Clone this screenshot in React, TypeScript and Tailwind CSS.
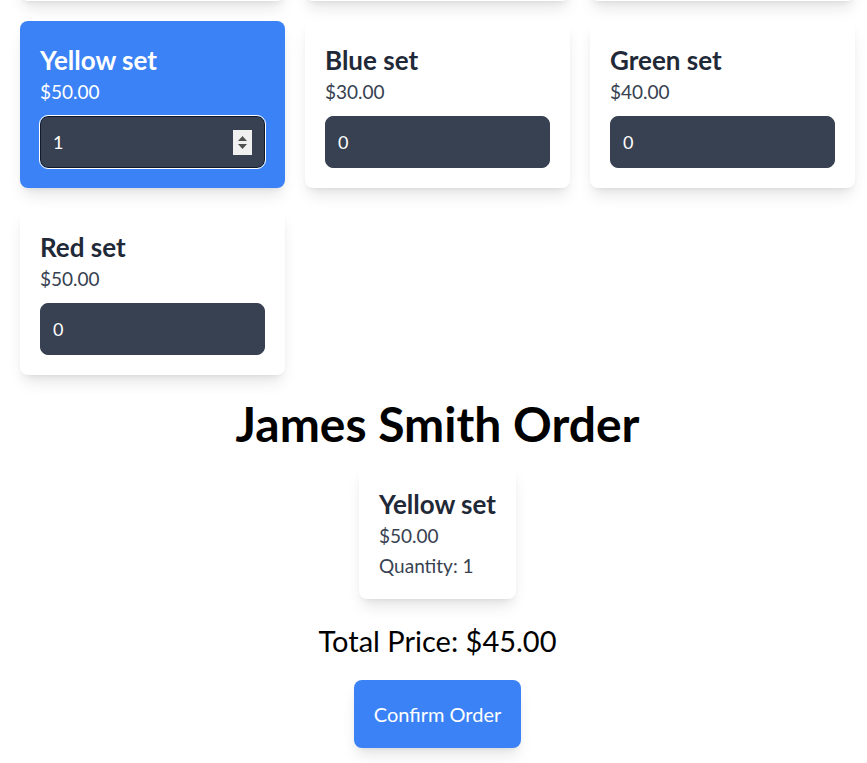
import { useState } from "react";

type Product = { id: number; name: string; price: number };

const products: Product[] = [
  { id: 4, name: "Yellow set", price: 50 },
  { id: 5, name: "Blue set", price: 30 },
  { id: 6, name: "Green set", price: 40 },
  { id: 7, name: "Red set", price: 50 },
];

const money = (n: number) => `$${n.toFixed(2)}`;

// fake number spinner, shown on the focused field
const Spinner = () => (
  <span className="flex h-[25px] w-[19px] flex-col items-center justify-center gap-[3px] bg-[#f0f0f0]">
    <svg width="9" height="5" viewBox="0 0 9 5">
      <path d="M4.5 0 L9 5 L0 5 Z" fill="#505050" />
    </svg>
    <svg width="9" height="5" viewBox="0 0 9 5">
      <path d="M0 0 L9 0 L4.5 5 Z" fill="#505050" />
    </svg>
  </span>
);

interface ProductCardProps {
  product: Product;
  quantity: number;
  selected: boolean;
  onChange: (q: number) => void;
}

const ProductCard: React.FC<ProductCardProps> = ({
  product,
  quantity,
  selected,
  onChange,
}) => {
  return (
    <div
      className={
        "h-[167px] rounded-lg p-5 shadow-lg " +
        (selected ? "bg-[#3b82f6]" : "bg-white")
      }
    >
      <h3
        className={
          "text-[26px] leading-[38px] font-bold " +
          (selected ? "text-white" : "text-[#1f2937]")
        }
      >
        {product.name}
      </h3>
      <p
        className={
          "text-[19px] leading-[26px] " +
          (selected ? "text-white" : "text-[#374151]")
        }
      >
        {money(product.price)}
      </p>
      <div
        className={
          "mt-[11px] flex h-[52px] items-center rounded-lg border bg-[#374151] pr-3 " +
          (selected
            ? "border-[#111827] outline outline-1 outline-white"
            : "border-[#374151]")
        }
      >
        <input
          type="text"
          value={quantity}
          onChange={(e) => onChange(Number(e.target.value) || 0)}
          className="h-full min-w-0 flex-1 bg-transparent pl-3 text-lg text-white outline-none"
        />
        {selected && <Spinner />}
      </div>
    </div>
  );
};

export default function App() {
  const [quantities, setQuantities] = useState<Record<number, number>>({
    4: 1,
  });

  const ordered = products.filter((p) => (quantities[p.id] ?? 0) > 0);

  return (
    <div
      className="w-full overflow-hidden bg-white"
      style={{ fontFamily: 'Lato, "Open Sans", sans-serif' }}
    >
      <div className="-mt-[166px] flex w-[875px] flex-col items-center pb-5">
        <div className="grid grid-cols-[repeat(3,265px)] gap-5 px-5">
          {/* row scrolled out of view */}
          <div className="h-[167px] rounded-lg bg-white shadow-lg" />
          <div className="h-[167px] rounded-lg bg-white shadow-lg" />
          <div className="h-[167px] rounded-lg bg-white shadow-lg" />
          {products.map((p) => (
            <ProductCard
              key={p.id}
              product={p}
              quantity={quantities[p.id] ?? 0}
              selected={p.id === 4}
              onChange={(q) => setQuantities({ ...quantities, [p.id]: q })}
            />
          ))}
        </div>

        <h1 className="mt-[25px] text-5xl leading-[48px] font-bold text-black">
          James Smith Order
        </h1>

        <div className="mt-[17px] flex flex-col gap-4">
          {ordered.map((p) => (
            <div key={p.id} className="rounded-lg bg-white p-5 shadow-lg">
              <h3 className="text-[26px] leading-[38px] font-bold text-[#1f2937]">
                {p.name}
              </h3>
              <p className="text-[19px] leading-[26px] text-[#374151]">
                {money(p.price)}
              </p>
              <p className="mt-1 text-[19px] leading-[26px] text-[#374151]">
                Quantity: {quantities[p.id]}
              </p>
            </div>
          ))}
        </div>

        <p className="mt-6 text-[29px] leading-9 text-black">
          Total Price: $45.00
        </p>

        <button className="mt-[21px] rounded-lg bg-[#3b82f6] px-5 py-5 text-xl leading-7 text-white shadow-lg">
          Confirm Order
        </button>
      </div>
    </div>
  );
}
